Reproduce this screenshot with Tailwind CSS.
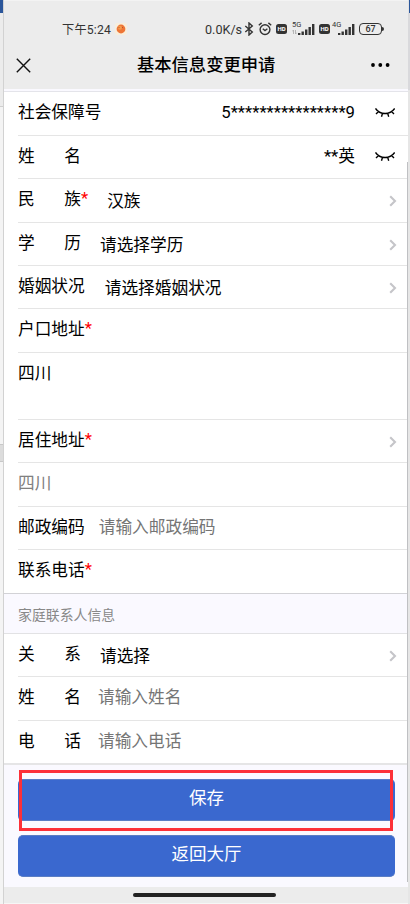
<!DOCTYPE html>
<html lang="zh-CN">
<head>
<meta charset="utf-8">
<title>基本信息变更申请</title>
<script src="https://cdn.jsdelivr.net/npm/@tailwindcss/browser@4"></script>
</head>
<body class="relative w-[410px] h-[904px] overflow-hidden bg-[#f4f4f4] font-[Roboto,'Noto_Sans_CJK_SC',sans-serif] text-[16.7px] text-black">
<svg class="absolute w-0 h-0">
  <symbol id="chev" viewBox="0 0 8 12"><path d="M1.2 1.2 6 6 1.2 10.8" fill="none" stroke="#c5c5c9" stroke-width="2.1"/></symbol>
  <symbol id="eye" viewBox="0 0 20 12"><path d="M.5 1.5C5 8.2 15 8.2 19.7 1.5M3.6 4.5 1 7M7.5 6.4 6.5 9.7M12.7 6.4l1 3.3M16.5 4.5 19 7" fill="none" stroke="#000" stroke-width="1.4"/></symbol>
  <symbol id="signal" viewBox="0 0 17 11"><path d="M0 9h2.4v2H0zM3.5 7.5h2.4V11H3.5zM7 5.5h2.4V11H7zM10.5 3h2.4v8h-2.4zM14 0h2.4v11H14z" fill="#333"/></symbol>
</svg>
<div class="flex h-[904px]">
  <div class="w-[3px] shrink-0 flex flex-col">
    <div class="h-[13px] bg-[#2b569a]"></div>
    <div class="h-[94px] bg-[#ececec] border-b border-[#cfcfcf]"></div>
    <div class="h-[338px] border-b border-[#c8c8c8]"></div>
    <div class="h-[17px] bg-[#dcdcdc] border-b border-[#c8c8c8]"></div>
  </div>
  <main class="w-[405px] shrink-0 h-[904px] bg-white border-l border-[#d2d2d2] flex flex-col">
    <header class="h-[89px] bg-[#ececec] border-t border-[#f3f3f3] shrink-0">
      <div class="h-[40px] pt-[17px] pl-[58px] flex items-start text-[12.2px] leading-[24px] text-[#333]">
        <span class="w-[50px] whitespace-nowrap tracking-[0.2px]">下午5:24</span>
        <svg class="w-[12px] h-[12px] mt-[5px] ml-[3px]" viewBox="0 0 12 12"><rect width="12" height="12" rx="2.5" fill="#f8eedc"/><circle cx="6" cy="6" r="4.4" fill="#ee7536"/><circle cx="5" cy="4.8" r="2" fill="#f49a4c"/><path d="M3.5 4.5h1M7 4.5h1" stroke="#a8482c" stroke-width=".8"/></svg>
        <span class="ml-[78px] w-[38px] whitespace-nowrap text-[12.6px]">0.0K/s</span>
        <svg class="w-[10px] h-[14px] mt-[4px] ml-[1px]" viewBox="0 0 10 14"><path d="m1.3 4 7 6L5 13V1l3.3 3-7 6" fill="none" stroke="#333" stroke-width="1.4"/></svg>
        <svg class="w-[14px] h-[14px] mt-[4px] ml-[4px]" viewBox="0 0 14 14"><g fill="none" stroke="#333" stroke-width="1.4"><circle cx="7" cy="7.6" r="4.9"/><path d="M.8 3.2 3.6.9M13.2 3.2 10.4.9M4.8 6.8 7 8.6l2.4-1.8"/></g></svg>
        <span class="ml-[4px] mt-[6px] w-[11px] h-[10px] rounded-[2.5px] bg-[#333] text-white text-[6px] font-bold leading-[10px] text-center">HD</span>
        <div class="relative ml-[5px] w-[24px] h-[14px] mt-[3px]">
          <span class="absolute left-0 top-0 text-[7.5px] leading-[8px]">5G</span>
          <svg class="absolute left-0 top-[9px] w-[5px] h-[4px]" viewBox="0 0 5 4"><path d="M1.5 4V0L0 1.5M3.5 0v4L5 2.5" fill="none" stroke="#aaa" stroke-width=".8"/></svg>
          <svg class="absolute left-[6px] top-[3px] w-[17px] h-[11px]"><use href="#signal"/></svg>
        </div>
        <span class="ml-[3px] mt-[6px] w-[11px] h-[10px] rounded-[2.5px] bg-[#333] text-white text-[6px] font-bold leading-[10px] text-center">HD</span>
        <div class="relative ml-[2px] w-[24px] h-[14px] mt-[3px]">
          <span class="absolute left-0 top-0 text-[7.5px] leading-[8px]">4G</span>
          <svg class="absolute left-[6px] top-[3px] w-[17px] h-[11px]"><use href="#signal"/></svg>
        </div>
        <div class="ml-[3px] mt-[5px] w-[23px] h-[12px] border-[1.5px] border-[#333] rounded-[4px] text-[9px] leading-[10px] font-medium text-center">67</div>
        <div class="mt-[9px] w-[2px] h-[4px] bg-[#333] rounded-r-sm"></div>
      </div>
      <div class="h-[48px] flex items-center pl-[12px]">
        <svg class="w-[15px] h-[15px]" viewBox="0 0 15 15"><path d="m.8.8 13.4 13.4M14.2.8.8 14.2" stroke="#111" stroke-width="1.4"/></svg>
        <h1 class="ml-[106px] pt-[2px] w-[140px] whitespace-nowrap text-[17.3px] font-medium">基本信息变更申请</h1>
        <svg class="ml-[94px] w-[19px] h-[4px]" viewBox="0 0 19 4"><circle cx="2" cy="2" r="1.9"/><circle cx="9.3" cy="2" r="1.9"/><circle cx="16.6" cy="2" r="1.9"/></svg>
      </div>
    </header>
    <div class="h-[3px] shrink-0 bg-[#faf9ff] border-b border-[#e4e4ea]"></div>

    <section class="pl-[14px] leading-[42px]">
      <div class="h-[44px] border-b border-[#e5e5e5] flex"><span>社会保障号</span><span class="ml-auto">5****************9</span><svg class="w-[20px] h-[12px] mt-[15px] ml-[20px] mr-[13px]"><use href="#eye"/></svg></div>
      <div class="h-[43px] border-b border-[#e5e5e5] flex"><span class="w-[63px] flex justify-between"><i class="not-italic">姓</i><i class="not-italic">名</i></span><span class="ml-auto">**英</span><svg class="w-[20px] h-[12px] mt-[15px] ml-[20px] mr-[13px]"><use href="#eye"/></svg></div>
      <div class="h-[44px] border-b border-[#e5e5e5] flex"><span class="w-[63px] flex justify-between"><i class="not-italic">民</i><i class="not-italic">族</i></span><span class="text-[#f00] leading-[40px]">*</span><span class="ml-[19px] mt-[2px]">汉族</span><svg class="w-[8px] h-[12px] mt-[16px] ml-auto mr-[11px]"><use href="#chev"/></svg></div>
      <div class="h-[43px] border-b border-[#e5e5e5] flex"><span class="w-[63px] flex justify-between"><i class="not-italic">学</i><i class="not-italic">历</i></span><span class="ml-[19px] mt-[2px]">请选择学历</span><svg class="w-[8px] h-[12px] mt-[16px] ml-auto mr-[11px]"><use href="#chev"/></svg></div>
      <div class="h-[43px] border-b border-[#e5e5e5] flex"><span>婚姻状况</span><span class="ml-[20px] mt-[2px]">请选择婚姻状况</span><svg class="w-[8px] h-[12px] mt-[16px] ml-auto mr-[11px]"><use href="#chev"/></svg></div>
      <div class="h-[44px] border-b border-[#e5e5e5] flex"><span>户口地址</span><span class="text-[#f00] leading-[40px]">*</span></div>
      <div class="h-[67px] border-b border-[#e5e5e5] flex"><span>四川</span></div>
      <div class="h-[43px] border-b border-[#e5e5e5] flex"><span>居住地址</span><span class="text-[#f00] leading-[40px]">*</span><svg class="w-[8px] h-[12px] mt-[16px] ml-auto mr-[11px]"><use href="#chev"/></svg></div>
      <div class="h-[44px] border-b border-[#e5e5e5] flex text-[#808080]"><span>四川</span></div>
      <div class="h-[43px] border-b border-[#e5e5e5] flex"><span>邮政编码</span><span class="ml-[14px] text-[#757575]">请输入邮政编码</span></div>
      <div class="h-[43px] flex"><span>联系电话</span><span class="text-[#f00] leading-[40px]">*</span></div>
    </section>
    <h2 class="h-[41px] shrink-0 bg-[#faf9ff] border-t border-b border-t-[#d2d2d6] border-b-[#e2e2e4] pl-[14px] text-[13.9px] leading-[42px] text-[#888]">家庭联系人信息</h2>
    <section class="pl-[14px] leading-[42px]">
      <div class="h-[43px] border-b border-[#e5e5e5] flex"><span class="w-[63px] flex justify-between"><i class="not-italic">关</i><i class="not-italic">系</i></span><span class="ml-[19px] mt-[2px]">请选择</span><svg class="w-[8px] h-[12px] mt-[16px] ml-auto mr-[11px]"><use href="#chev"/></svg></div>
      <div class="h-[44px] border-b border-[#e5e5e5] flex"><span class="w-[63px] flex justify-between"><i class="not-italic">姓</i><i class="not-italic">名</i></span><span class="ml-[17px] text-[#757575]">请输入姓名</span></div>
      <div class="h-[42px] flex"><span class="w-[63px] flex justify-between"><i class="not-italic">电</i><i class="not-italic">话</i></span><span class="ml-[17px] text-[#757575]">请输入电话</span></div>
    </section>
    <div class="h-[124px] shrink-0 bg-[#faf9ff] border-t-2 border-[#e5e5e6] px-[14px] pt-[14px] pr-[13px] text-center text-white text-[17.5px]">
      <button class="block w-full h-[42px] pb-[3px] rounded-[5px] bg-[#3a68cf] border-t border-b border-[#5a7dc4] leading-[37px]">保存</button>
      <button class="block w-full h-[42px] pb-[3px] mt-[14px] rounded-[5px] bg-[#3a68cf] border-t border-b border-[#5a7dc4] leading-[37px]">返回大厅</button>
    </div>
    <footer class="h-[17px] bg-[#ececec] border-b border-[#f6f6f6] flex"><div class="w-[143px] h-[4px] mt-[6px] ml-[129px] rounded-full bg-[#222]"></div></footer>
  </main>
  <div class="w-[2px] flex flex-col">
    <div class="h-[13px] bg-[#e2e2e4]"></div>
    <div class="h-[77px] bg-[#d9d9dc]"></div>
    <div class="grow bg-[#e6e6e6]"></div>
  </div>
</div>
<div class="absolute left-[407px] top-[162px] w-px h-[720px] bg-[#bfc0c3]"></div>
<div class="absolute left-[409px] top-0 w-px h-[13px] bg-[#2b569a]"></div>
<div class="absolute left-[19px] top-[770px] w-[374px] h-[61px] border-3 border-[#fc3038]"></div>
</body>
</html>
